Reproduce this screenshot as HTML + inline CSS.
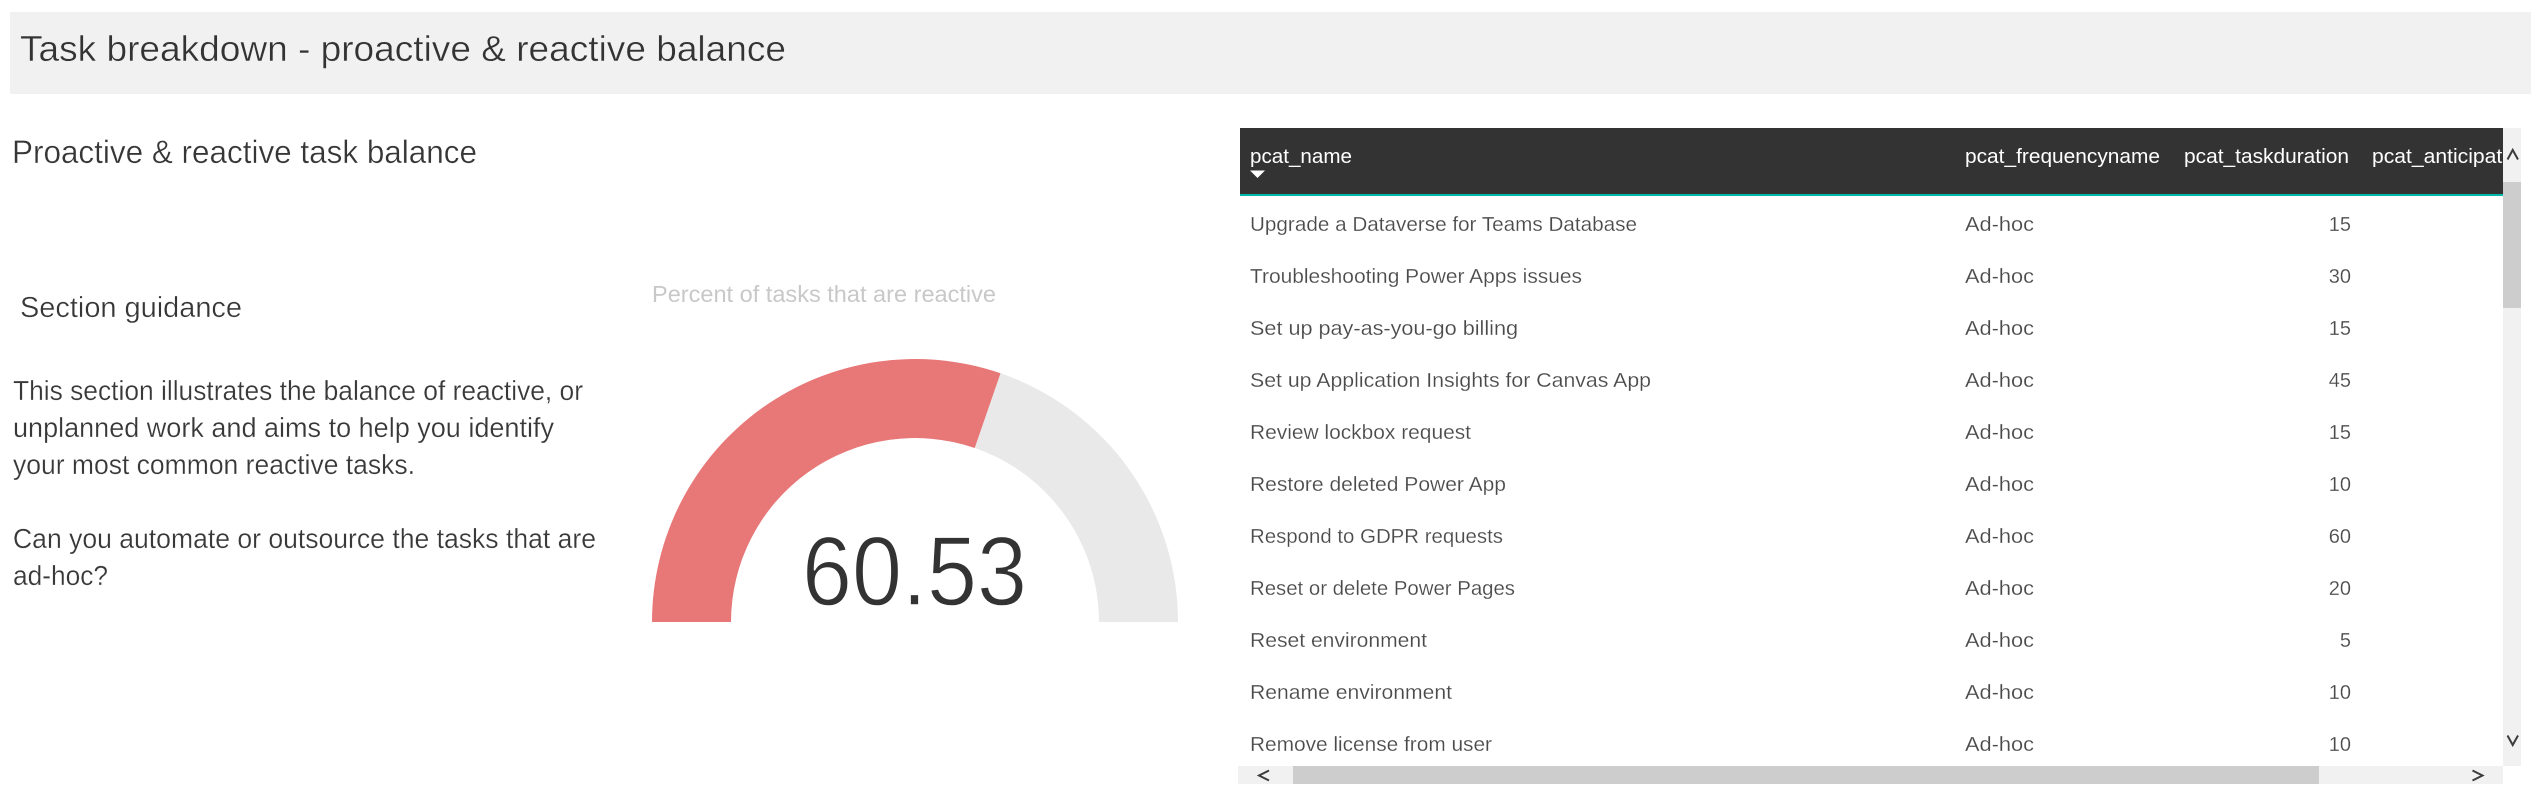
<!DOCTYPE html>
<html lang="en">
<head>
<meta charset="utf-8">
<title>Task breakdown</title>
<style>
html,body{margin:0;padding:0;background:#fff;width:2540px;height:802px;overflow:hidden}
svg{display:block;position:absolute;left:0;top:0}
text{font-family:"Liberation Sans",sans-serif}
.row{font-size:20px;fill:#4a4a4a;stroke:#fff;stroke-width:.18px}
.hd{font-size:20.5px;fill:#fff}
.body{font-size:27.5px;fill:#383838;stroke:#fff;stroke-width:.25px}
</style>
</head>
<body>
<svg width="2540" height="802" viewBox="0 0 2540 802" xmlns="http://www.w3.org/2000/svg">
<defs><clipPath id="hc"><rect x="1240" y="128" width="1263" height="66"/></clipPath></defs>

<rect x="10" y="12" width="2521" height="82" fill="#f1f1f1"/>
<text x="20" y="61" font-size="36.5" fill="#333" stroke="#f1f1f1" stroke-width=".4" textLength="766" lengthAdjust="spacingAndGlyphs">Task breakdown - proactive &amp; reactive balance</text>

<text x="12" y="163" font-size="32.5" fill="#363636" stroke="#fff" stroke-width=".35" textLength="465" lengthAdjust="spacingAndGlyphs">Proactive &amp; reactive task balance</text>
<text x="20" y="317" font-size="28.5" fill="#363636" stroke="#fff" stroke-width=".35" textLength="222" lengthAdjust="spacingAndGlyphs">Section guidance</text>

<text class="body" x="13" y="400" textLength="570" lengthAdjust="spacingAndGlyphs">This section illustrates the balance of reactive, or</text>
<text class="body" x="13" y="437" textLength="541" lengthAdjust="spacingAndGlyphs">unplanned work and aims to help you identify</text>
<text class="body" x="13" y="474" textLength="402" lengthAdjust="spacingAndGlyphs">your most common reactive tasks.</text>
<text class="body" x="13" y="548" textLength="583" lengthAdjust="spacingAndGlyphs">Can you automate or outsource the tasks that are</text>
<text class="body" x="13" y="585" textLength="95" lengthAdjust="spacingAndGlyphs">ad-hoc?</text>

<text x="652" y="302" font-size="23" fill="#c8c8c8" textLength="344" lengthAdjust="spacingAndGlyphs">Percent of tasks that are reactive</text>

<path d="M1000.5 373.3A263 263 0 0 1 1178 622H1099A184 184 0 0 0 974.7 448Z" fill="#e9e9e9"/>
<path d="M652 622A263 263 0 0 1 1000.5 373.3L974.7 448A184 184 0 0 0 731 622Z" fill="#e87777"/>
<text x="802" y="605" font-size="98" fill="#333" stroke="#fff" stroke-width="1.4" textLength="225" lengthAdjust="spacingAndGlyphs">60.53</text>

<rect x="1240" y="128" width="1263" height="66" fill="#333"/>
<rect x="1240" y="194" width="1263" height="2" fill="#01b8aa"/>
<text class="hd" x="1250" y="163" textLength="102" lengthAdjust="spacingAndGlyphs">pcat_name</text>
<path d="M1250 170.5H1265L1257.5 178Z" fill="#fff"/>
<text class="hd" x="1965" y="163" textLength="195" lengthAdjust="spacingAndGlyphs">pcat_frequencyname</text>
<text class="hd" x="2184" y="163" textLength="165" lengthAdjust="spacingAndGlyphs">pcat_taskduration</text>
<g clip-path="url(#hc)"><text class="hd" x="2372" y="163" textLength="142" lengthAdjust="spacingAndGlyphs">pcat_anticipate</text></g>

<text class="row" x="1250" y="231" textLength="387" lengthAdjust="spacingAndGlyphs">Upgrade a Dataverse for Teams Database</text>
<text class="row" x="1250" y="283" textLength="332" lengthAdjust="spacingAndGlyphs">Troubleshooting Power Apps issues</text>
<text class="row" x="1250" y="335" textLength="268" lengthAdjust="spacingAndGlyphs">Set up pay-as-you-go billing</text>
<text class="row" x="1250" y="387" textLength="401" lengthAdjust="spacingAndGlyphs">Set up Application Insights for Canvas App</text>
<text class="row" x="1250" y="439" textLength="221" lengthAdjust="spacingAndGlyphs">Review lockbox request</text>
<text class="row" x="1250" y="491" textLength="256" lengthAdjust="spacingAndGlyphs">Restore deleted Power App</text>
<text class="row" x="1250" y="543" textLength="253" lengthAdjust="spacingAndGlyphs">Respond to GDPR requests</text>
<text class="row" x="1250" y="595" textLength="265" lengthAdjust="spacingAndGlyphs">Reset or delete Power Pages</text>
<text class="row" x="1250" y="647" textLength="177" lengthAdjust="spacingAndGlyphs">Reset environment</text>
<text class="row" x="1250" y="699" textLength="202" lengthAdjust="spacingAndGlyphs">Rename environment</text>
<text class="row" x="1250" y="751" textLength="242" lengthAdjust="spacingAndGlyphs">Remove license from user</text>

<text class="row" x="1965" y="231" textLength="69" lengthAdjust="spacingAndGlyphs">Ad-hoc</text>
<text class="row" x="1965" y="283" textLength="69" lengthAdjust="spacingAndGlyphs">Ad-hoc</text>
<text class="row" x="1965" y="335" textLength="69" lengthAdjust="spacingAndGlyphs">Ad-hoc</text>
<text class="row" x="1965" y="387" textLength="69" lengthAdjust="spacingAndGlyphs">Ad-hoc</text>
<text class="row" x="1965" y="439" textLength="69" lengthAdjust="spacingAndGlyphs">Ad-hoc</text>
<text class="row" x="1965" y="491" textLength="69" lengthAdjust="spacingAndGlyphs">Ad-hoc</text>
<text class="row" x="1965" y="543" textLength="69" lengthAdjust="spacingAndGlyphs">Ad-hoc</text>
<text class="row" x="1965" y="595" textLength="69" lengthAdjust="spacingAndGlyphs">Ad-hoc</text>
<text class="row" x="1965" y="647" textLength="69" lengthAdjust="spacingAndGlyphs">Ad-hoc</text>
<text class="row" x="1965" y="699" textLength="69" lengthAdjust="spacingAndGlyphs">Ad-hoc</text>
<text class="row" x="1965" y="751" textLength="69" lengthAdjust="spacingAndGlyphs">Ad-hoc</text>

<g text-anchor="end">
<text class="row" x="2351" y="231">15</text>
<text class="row" x="2351" y="283">30</text>
<text class="row" x="2351" y="335">15</text>
<text class="row" x="2351" y="387">45</text>
<text class="row" x="2351" y="439">15</text>
<text class="row" x="2351" y="491">10</text>
<text class="row" x="2351" y="543">60</text>
<text class="row" x="2351" y="595">20</text>
<text class="row" x="2351" y="647">5</text>
<text class="row" x="2351" y="699">10</text>
<text class="row" x="2351" y="751">10</text>
</g>

<rect x="2503" y="128" width="18" height="638" fill="#f1f1f1"/>
<rect x="2503" y="182" width="18" height="126" fill="#cdcdcd"/>
<path d="M2507.5 159.5L2512.7 150L2518 159.5" fill="none" stroke="#3c3c3c" stroke-width="2"/>
<path d="M2507.5 735.5L2512.7 745L2518 735.5" fill="none" stroke="#3c3c3c" stroke-width="2"/>

<rect x="1238" y="766" width="1265" height="18" fill="#f1f1f1"/>
<rect x="1293" y="766" width="1026" height="18" fill="#cdcdcd"/>
<path d="M1269 770.5L1259 775.5L1269 780.5" fill="none" stroke="#3c3c3c" stroke-width="2"/>
<path d="M2472.5 770.5L2482.5 775.5L2472.5 780.5" fill="none" stroke="#3c3c3c" stroke-width="2"/>
</svg>
</body>
</html>
